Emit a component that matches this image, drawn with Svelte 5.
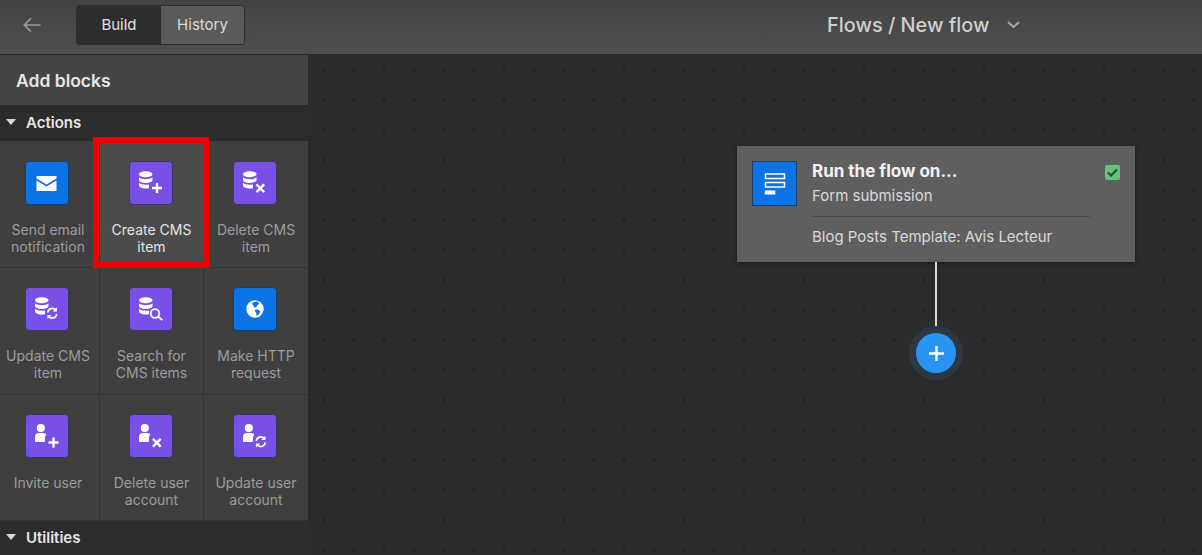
<script>
  const db = "M6.25 .2c3.45 0 6.25 1.35 6.25 3s-2.8 3-6.25 3S0 4.85 0 3.2 2.8 .2 6.25 .2zM0 6.3c1.5 1.5 4 1.9 6.25 1.9s4.75-.4 6.25-1.9V9c0 1.6-2.8 3-6.25 3S0 10.6 0 9zM0 11.8c1.5 1.5 4 1.9 6.25 1.9 1 0 2 0 3-.3v3.9c-1 .2-2 .2-3 .2C2.8 17.5 0 16.1 0 14.5z";
  const user = "M5.8 0a4.1 4.1 0 1 1 0 8.2 4.1 4.1 0 0 1 0-8.2zM0 18v-5.5C0 10.5 1.5 9 3.5 9H8c1.5 0 2.7.6 3.3 1.8-.9 1-1.4 2.5-1.4 4.2v3z";

  const blocks = [
    { label: ["Send email", "notification"], icon: "mail", color: "blue" },
    { label: ["Create CMS", "item"], icon: "db", badge: "plus", active: true },
    { label: ["Delete CMS", "item"], icon: "db", badge: "x" },
    { label: ["Update CMS", "item"], icon: "db", badge: "sync" },
    { label: ["Search for", "CMS items"], icon: "db", badge: "search" },
    { label: ["Make HTTP", "request"], icon: "globe", color: "blue" },
    { label: ["Invite user"], icon: "user", badge: "plus" },
    { label: ["Delete user", "account"], icon: "user", badge: "x" },
    { label: ["Update user", "account"], icon: "user", badge: "sync" },
  ];
</script>

<div class="app">
  <header class="top">
    <div class="top__left">
      <svg class="back" width="18" height="16" viewBox="0 0 18 16" fill="none" stroke="#9a9a9a" stroke-width="1.7">
        <path d="M17.5 8H1.5M8 1.3 1.3 8 8 14.7" />
      </svg>
      <div class="tabs">
        <button class="tab tab--on">Build</button>
        <button class="tab">History</button>
      </div>
    </div>
    <div class="crumb">
      <span>Flows / New flow</span>
      <svg width="13" height="8" viewBox="0 0 13 8" fill="none" stroke="#a6a6a6" stroke-width="2">
        <path d="M1 1l5.5 5L12 1" />
      </svg>
    </div>
  </header>

  <div class="body">
    <aside class="side">
      <div class="side__title">Add blocks</div>
      <div class="section"><i class="tri"></i>Actions</div>
      <div class="grid">
        {#each blocks as b}
          <div class="block" class:block--on={b.active}>
            <div class="ico" class:ico--blue={b.color === "blue"}>
              <svg width="24" height="24" viewBox="0 0 24 24" fill="#fff">
                {#if b.icon === "mail"}
                  <path d="M1.5 5h20v2.4l-10 6-10-6z" />
                  <path d="M1.5 9.6l10 6 10-6V20h-20z" />
                {:else if b.icon === "globe"}
                  <path fill-rule="evenodd" d="M12 3.3a8.7 8.7 0 1 1 0 17.4 8.7 8.7 0 0 1 0-17.4zM10 5.2l4.5-.6 1.6 2-2.300 2.200-.4 1.800-2.500-.4-.4-2-1.500-1zM12.500 12.200l3.500.8 1.200 1.600-1.500 3-2 1.300-.5-3-1.200-1.700z" />
                {:else if b.icon === "db"}
                  <path d={db} transform="scale(1.08 1)" />
                {:else}
                  <path d={user} />
                {/if}

                <g transform={b.icon === "db" ? "translate(-.5 -1.500)" : ""}>
                  {#if b.badge === "plus"}
                    <path d="M17.300 13.500h2.400v3.800h3.800v2.400h-3.800v3.800h-2.400v-3.800h-3.800v-2.400h3.800z" />
                  {:else if b.badge === "x"}
                    <path d="M14.800 14l3 3 3-3 1.700 1.700-3 3 3 3-1.700 1.700-3-3-3 3-1.700-1.700 3-3-3-3z" />
                  {:else if b.badge === "sync"}
                    <g fill="none" stroke="#fff" stroke-width="1.700">
                      <path d="M13.300 17a4.500 4.500 0 0 1 7.700-2.800M22.200 18.400a4.500 4.500 0 0 1-7.700 2.800" />
                    </g>
                    <path d="M22.500 11.800V16h-4.200zM12.900 23.600v-4.200h4.200z" />
                  {:else if b.badge === "search"}
                    <g fill="none" stroke="#fff" stroke-width="1.800">
                      <circle cx="16.500" cy="18" r="4.300" />
                      <path d="M19.600 21.100 23.800 24.500" />
                    </g>
                  {/if}
                </g>
              </svg>
            </div>
            <div class="block__label">
              {#each b.label as line}<div>{line}</div>{/each}
            </div>
          </div>
        {/each}
      </div>
      <div class="section"><i class="tri"></i>Utilities</div>
      <div class="mark"></div>
    </aside>

    <main class="canvas">
      <div class="node">
        <div class="node__ico">
          <svg width="22" height="22" viewBox="0 0 22 22" fill="none">
            <rect x="1.500" y="1" width="19" height="4.500" stroke="#fff" stroke-width="1.500" />
            <rect x="1.500" y="9.500" width="19" height="4.500" stroke="#fff" stroke-width="1.500" />
            <rect x="0.800" y="17.500" width="10.500" height="4" fill="#fff" />
          </svg>
        </div>
        <div class="node__text">
          <div class="node__title">Run the flow on...</div>
          <div class="node__sub">Form submission</div>
          <div class="node__rule"></div>
          <div class="node__sub node__sub--last">Blog Posts Template: Avis Lecteur</div>
        </div>
        <div class="check">
          <svg width="11" height="9" viewBox="0 0 11 9" fill="none" stroke="#2e4a2c" stroke-width="2.200">
            <path d="M1 4.500l3 3L10 1.500" />
          </svg>
        </div>
      </div>
      <div class="wire"></div>
      <button class="add" aria-label="Add">
        <svg width="15" height="15" viewBox="0 0 15 15" fill="#fff">
          <path d="M6.300 0h2.400v6.300H15v2.400H8.700V15H6.300V8.700H0V6.300h6.300z" />
        </svg>
      </button>
    </main>
  </div>
</div>

<style>
  :global(body) {
    margin: 0;
    background: #2b2b2b;
    overflow: hidden;
  }
  .app {
    width: 1202px;
    height: 555px;
    display: flex;
    flex-direction: column;
    font-family: Inter, "Liberation Sans", sans-serif;
    overflow: hidden;
  }
  .top {
    height: 55px;
    box-sizing: border-box;
    flex: none;
    display: grid;
    grid-template-columns: 827px 1fr;
    align-items: center;
    background: linear-gradient(#434343, #4f4f4f);
    border-bottom: 1px solid #2a2a2a;
  }
  .top__left {
    display: flex;
    align-items: center;
    padding-left: 23px;
    padding-bottom: 5px;
  }
  .back {
    margin-right: 35px;
  }
  .tabs {
    display: flex;
    border: 1px solid #2e2e2e;
    border-radius: 3px;
    overflow: hidden;
  }
  .tab {
    width: 83px;
    height: 38px;
    padding: 0;
    border: 0;
    background: #5a5a5a;
    color: #d9d9d9;
    font: 400 15px Inter, sans-serif;
  }
  .tab--on {
    width: 84px;
    background: #2d2d2d;
    color: #e2e2e2;
  }
  .crumb {
    display: flex;
    align-items: center;
    gap: 17px;
    color: #cfcfcf;
    font-size: 19.9px;
    font-weight: 500;
    padding-bottom: 5px;
  }
  .body {
    flex: 1;
    display: flex;
    min-height: 0;
  }
  .side {
    position: relative;
    width: 309px;
    flex: none;
    box-sizing: border-box;
    border-right: 1px solid #2a2a2a;
    background: #3f3f3f;
  }
  .side__title {
    height: 51px;
    box-sizing: border-box;
    padding: 15px 0 0 16px;
    color: #e6e6e6;
    font-size: 17.5px;
    font-weight: 600;
    line-height: 22px;
    background: #444;
    border-bottom: 1px solid #2a2a2a;
  }
  .section {
    height: 35px;
    box-sizing: border-box;
    display: flex;
    align-items: center;
    padding: 0 0 2px 6px;
    background: #2c2c2c;
    border-bottom: 1px solid #2a2a2a;
    color: #e6e6e6;
    font-size: 15px;
    font-weight: 600;
  }
  .tri {
    width: 0;
    height: 0;
    margin-right: 10px;
    border-left: 5px solid transparent;
    border-right: 5px solid transparent;
    border-top: 6px solid #d8d8d8;
  }
  .grid {
    display: grid;
    grid-template-columns: 100px 104px 104px;
    grid-template-rows: 127px 127px 126px;
  }
  .block {
    box-sizing: border-box;
    display: flex;
    flex-direction: column;
    align-items: center;
    padding-top: 19px;
    background: #3f3f3f;
    border-right: 1px solid #333;
    border-bottom: 1px solid #333;
    color: #9c9c9c;
  }
  .block:nth-child(-n+3) {
    padding-top: 20px;
  }
  .block:nth-child(3n+1) {
    padding-right: 3px;
  }
  .block:nth-child(3n) {
    border-right: 0;
  }
  .block--on {
    background: #4b4b4b;
    color: #e4e4e4;
  }
  .ico {
    width: 44px;
    height: 44px;
    flex: none;
    box-sizing: border-box;
    display: flex;
    align-items: center;
    justify-content: center;
    margin-right: 2px;
    border-radius: 4px;
    background: #7950e6;
    border: 1px solid #3d3563;
  }
  .ico--blue {
    background: #0a73e6;
    border-color: #123f70;
  }
  .block__label {
    margin-top: 16px;
    font-size: 14px;
    line-height: 17px;
    text-align: center;
    white-space: nowrap;
  }
  .mark {
    position: absolute;
    left: 93px;
    top: 82px;
    width: 116px;
    height: 131px;
    box-sizing: border-box;
    border: 6px solid #f00000;
    pointer-events: none;
  }
  .canvas {
    position: relative;
    flex: 1;
    background-color: #2b2b2b;
    background-image: radial-gradient(circle at center, #1a1a1a 0, #1a1a1a 0.7px, transparent 1.3px);
    background-size: 30px 30px;
  }
  .node {
    position: absolute;
    left: 428px;
    top: 91px;
    width: 398px;
    height: 116px;
    box-sizing: border-box;
    display: flex;
    padding: 15px;
    background: #5f5f5f;
    box-shadow: 0 1px 4px rgba(0, 0, 0, 0.5);
  }
  .node__ico {
    width: 45px;
    height: 45px;
    flex: none;
    box-sizing: border-box;
    display: flex;
    align-items: center;
    justify-content: center;
    background: #0a73e6;
    border: 1px solid #1b3f66;
  }
  .node__text {
    width: 278px;
    margin-left: 15px;
  }
  .node__title {
    margin-top: -1px;
    color: #f2f2f2;
    font-size: 17px;
    font-weight: 700;
    line-height: 22px;
  }
  .node__sub {
    color: #dadada;
    font-size: 15px;
    line-height: 18px;
    margin-top: 5px;
    white-space: nowrap;
  }
  .node__sub--last {
    margin-top: 11px;
  }
  .node__rule {
    height: 1px;
    margin: 11px 0 0;
    background: #4a4a4a;
  }
  .check {
    width: 15px;
    height: 15px;
    margin: 4px 0 0 15px;
    display: flex;
    align-items: center;
    justify-content: center;
    border-radius: 2px;
    background: #62c37a;
  }
  .wire {
    position: absolute;
    left: 626px;
    top: 207px;
    width: 2px;
    height: 72px;
    background: #d8d8d8;
  }
  .add {
    position: absolute;
    left: 607px;
    top: 278px;
    width: 40px;
    height: 40px;
    padding: 0;
    border: 0;
    border-radius: 50%;
    display: flex;
    align-items: center;
    justify-content: center;
    background: #2a94f4;
    box-shadow: 0 0 0 7px #2c3945;
  }
</style>
